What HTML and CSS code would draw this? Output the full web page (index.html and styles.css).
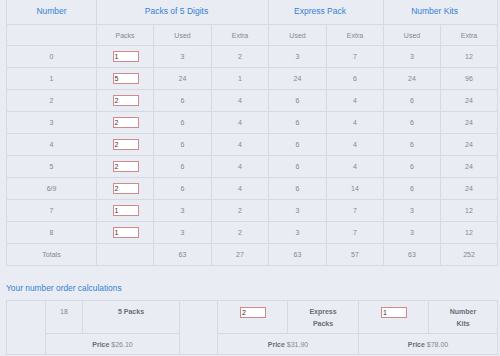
FILE: index.html
```html
<!DOCTYPE html>
<html>
<head>
<meta charset="utf-8">
<link rel="stylesheet" href="styles.css">
</head>
<body>
<table class="grid">
  <colgroup>
    <col class="c90"><col class="c57"><col class="c58"><col class="c57"><col class="c58"><col class="c57"><col class="c57"><col class="c57">
  </colgroup>
  <tr class="head">
    <th>Number</th>
    <th colspan="3" class="group">Packs of 5 Digits</th>
    <th colspan="2" class="group">Express Pack</th>
    <th colspan="2" class="group">Number Kits</th>
  </tr>
  <tr class="sub">
    <td></td><td>Packs</td><td>Used</td><td>Extra</td><td>Used</td><td>Extra</td><td>Used</td><td>Extra</td>
  </tr>
  <tr class="row"><td>0</td><td><span class="box">1</span></td><td>3</td><td>2</td><td>3</td><td>7</td><td>3</td><td>12</td></tr>
  <tr class="row"><td>1</td><td><span class="box">5</span></td><td>24</td><td>1</td><td>24</td><td>6</td><td>24</td><td>96</td></tr>
  <tr class="row"><td>2</td><td><span class="box">2</span></td><td>6</td><td>4</td><td>6</td><td>4</td><td>6</td><td>24</td></tr>
  <tr class="row"><td>3</td><td><span class="box">2</span></td><td>6</td><td>4</td><td>6</td><td>4</td><td>6</td><td>24</td></tr>
  <tr class="row"><td>4</td><td><span class="box">2</span></td><td>6</td><td>4</td><td>6</td><td>4</td><td>6</td><td>24</td></tr>
  <tr class="row"><td>5</td><td><span class="box">2</span></td><td>6</td><td>4</td><td>6</td><td>4</td><td>6</td><td>24</td></tr>
  <tr class="row"><td>6/9</td><td><span class="box">2</span></td><td>6</td><td>4</td><td>6</td><td>14</td><td>6</td><td>24</td></tr>
  <tr class="row"><td>7</td><td><span class="box">1</span></td><td>3</td><td>2</td><td>3</td><td>7</td><td>3</td><td>12</td></tr>
  <tr class="row"><td>8</td><td><span class="box">1</span></td><td>3</td><td>2</td><td>3</td><td>7</td><td>3</td><td>12</td></tr>
  <tr class="row"><td>Totals</td><td></td><td>63</td><td>27</td><td>63</td><td>57</td><td>63</td><td>252</td></tr>
</table>

<h2 class="title">Your number order calculations</h2>

<table class="calc">
  <colgroup>
    <col class="b39"><col class="b37"><col class="b97"><col class="b38"><col class="b70"><col class="b71"><col class="b70"><col class="b69">
  </colgroup>
  <tr class="top">
    <td rowspan="2"></td>
    <td class="num">18</td>
    <td class="lbl">5 Packs</td>
    <td rowspan="2"></td>
    <td><span class="box">2</span></td>
    <td class="lbl">Express<br>Packs</td>
    <td><span class="box">1</span></td>
    <td class="lbl">Number<br>Kits</td>
  </tr>
  <tr class="price">
    <td colspan="2"><b>Price</b> $26.10</td>
    <td colspan="2"><b>Price</b> $31.90</td>
    <td colspan="2"><b>Price</b> $78.00</td>
  </tr>
</table>
</body>
</html>
```
FILE: styles.css
```css
html, body {
  margin: 0;
  padding: 0;
  background: #e9ecf2;
}
body {
  padding-left: 6px;
  font-family: "Liberation Sans", Arial, sans-serif;
  color: #858891;
}
table {
  border-collapse: separate;
  border-spacing: 0;
  table-layout: fixed;
  border-left: 1px solid #d5dae2;
}
td, th {
  padding: 0;
  border-right: 1px solid #d5dae2;
  border-bottom: 1px solid #d5dae2;
  text-align: center;
  vertical-align: middle;
  font-weight: normal;
}
.grid { width: 491px; }
.c90 { width: 90px; }
.c57 { width: 57px; }
.c58 { width: 58px; }

.head { height: 25px; }
.head th {
  color: #3582d6;
  font-size: 8.5px;
  padding-bottom: 3px;
}
.head th.group { padding-right: 12px; }
.sub { height: 21px; }
.sub td, .row td { font-size: 7px; }
.row { height: 22px; }

.box {
  display: inline-block;
  box-sizing: border-box;
  width: 26px;
  height: 11px;
  border: 1px solid #cf8a8c;
  background: #ffffff;
  color: #333;
  font-size: 7px;
  line-height: 9px;
  text-align: left;
  padding-left: 1px;
  vertical-align: middle;
  margin-left: 1px;
}

.title {
  margin: 16px 0 6px;
  font-size: 8.4px;
  line-height: 12px;
  font-weight: normal;
  color: #3582d6;
}

.calc {
  width: 491px;
  border-top: 1px solid #d5dae2;
}
.b39 { width: 39px; }
.b37 { width: 37px; }
.b97 { width: 97px; }
.b38 { width: 38px; }
.b70 { width: 70px; }
.b71 { width: 71px; }
.b69 { width: 69px; }
.calc td { font-size: 7px; }
.top { height: 33px; }
.top td {
  vertical-align: top;
  padding-top: 5px;
  line-height: 12px;
}
.top td .box { margin-top: 1px; vertical-align: top; }
.top td.lbl { font-weight: bold; color: #6b6e75; }
.price { height: 21px; }
.price td { color: #858891; }
.price b { color: #6b6e75; }
```
